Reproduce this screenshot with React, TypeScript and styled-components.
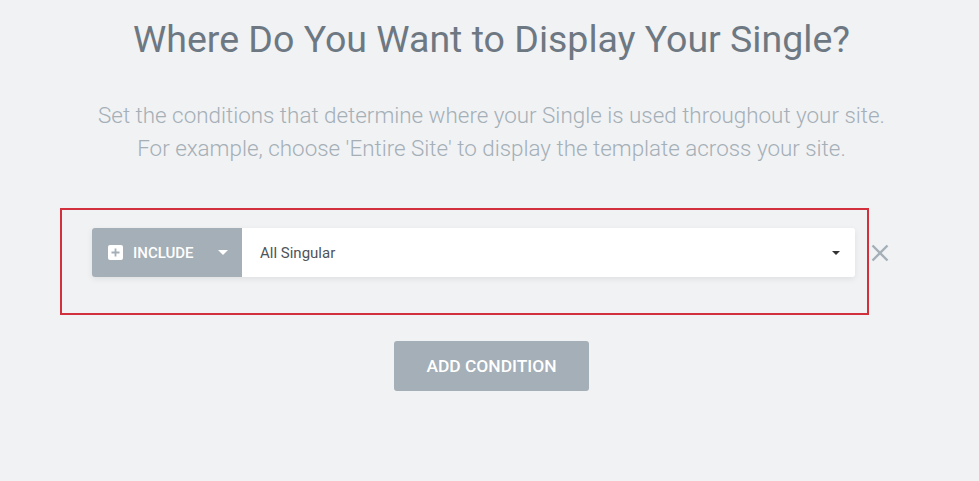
import React from "react";
import styled, { createGlobalStyle } from "styled-components";

const GlobalStyle = createGlobalStyle`
  html, body {
    margin: 0;
    padding: 0;
    background: #f1f2f4;
    font-family: Roboto, "Liberation Sans", Arial, sans-serif;
  }
`;

const Page = styled.div`
  width: 979px;
  height: 481px;
  overflow: hidden;
  display: flex;
  flex-direction: column;
  align-items: center;
`;

const Title = styled.h1`
  margin: 15px 0 0 4px;
  font-size: 37.5px;
  line-height: 48px;
  font-weight: 400;
  color: #6d7882;
  text-align: center;
`;

const Description = styled.p`
  margin: 36px 0 0 4px;
  font-size: 22.4px;
  line-height: 33px;
  font-weight: 300;
  color: #a4afb7;
  text-align: center;
`;

const Highlight = styled.div`
  align-self: flex-start;
  box-sizing: border-box;
  margin: 43px 0 0 60px;
  width: 809px;
  height: 107px;
  padding: 18px 0 0 30px;
  border: 2px solid #d2303d;
`;

const ConditionRow = styled.div`
  display: flex;
  align-items: center;
  width: 797px;
`;

const ConditionBox = styled.div`
  flex: 1;
  display: flex;
  height: 49px;
  border-radius: 3px;
  box-shadow: 0 2px 6px rgba(0, 0, 0, 0.08);
`;

const TypeSelect = styled.div`
  width: 150px;
  box-sizing: border-box;
  display: flex;
  align-items: center;
  padding: 0 14px 0 16px;
  background: #a4afb7;
  border-radius: 3px 0 0 3px;
  color: #fff;
  font-size: 15px;
  font-weight: 500;
  text-transform: uppercase;
`;

const PlusIcon = styled.span`
  width: 15px;
  height: 15px;
  border-radius: 2px;
  background: #fff;
  margin-right: 10px;
  display: flex;
  align-items: center;
  justify-content: center;
`;

const Caret = styled.span<{ $color: string; $size: number }>`
  margin-left: auto;
  width: 0;
  height: 0;
  border-left: ${(p) => p.$size}px solid transparent;
  border-right: ${(p) => p.$size}px solid transparent;
  border-top: ${(p) => p.$size}px solid ${(p) => p.$color};
`;

const ValueSelect = styled.div`
  flex: 1;
  display: flex;
  align-items: center;
  padding: 0 15px 0 18px;
  background: #fff;
  border-radius: 0 3px 3px 0;
  color: #4f5458;
  font-size: 15px;
`;

const RemoveButton = styled.button`
  margin-left: 16px;
  padding: 0;
  border: 0;
  background: none;
  width: 18px;
  height: 18px;
  display: flex;
  cursor: pointer;
`;

const AddButton = styled.button`
  margin: 26px 0 0 4px;
  width: 195px;
  height: 50px;
  border: 0;
  border-radius: 3px;
  background: #a4afb7;
  color: #fff;
  font-family: inherit;
  font-size: 17.4px;
  font-weight: 500;
  text-transform: uppercase;
  cursor: pointer;
`;

export default function App() {
  return (
    <Page>
      <GlobalStyle />
      <Title>Where Do You Want to Display Your Single?</Title>
      <Description>
        Set the conditions that determine where your Single is used throughout your site.
        <br />
        For example, choose 'Entire Site' to display the template across your site.
      </Description>
      <Highlight>
        <ConditionRow>
          <ConditionBox>
            <TypeSelect>
              <PlusIcon>
                <svg width="9" height="9" viewBox="0 0 9 9">
                  <path d="M4.5 0.5v8M0.5 4.5h8" stroke="#a4afb7" strokeWidth="1.8" />
                </svg>
              </PlusIcon>
              Include
              <Caret $color="#fff" $size={5} />
            </TypeSelect>
            <ValueSelect>
              All Singular
              <Caret $color="#333" $size={4} />
            </ValueSelect>
          </ConditionBox>
          <RemoveButton aria-label="Remove condition">
            <svg width="18" height="18" viewBox="0 0 18 18">
              <path d="M1.5 1.5l15 15M16.5 1.5l-15 15" stroke="#a4afb7" strokeWidth="2.4" />
            </svg>
          </RemoveButton>
        </ConditionRow>
      </Highlight>
      <AddButton>Add Condition</AddButton>
    </Page>
  );
}
